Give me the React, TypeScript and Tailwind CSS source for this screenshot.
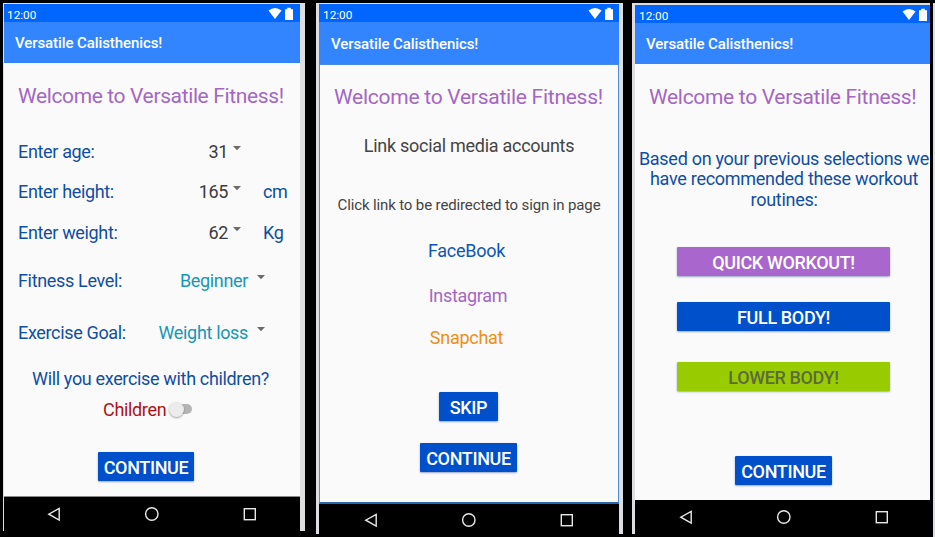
import type { ReactNode } from "react";

function StatusBar({ className }: { className: string }) {
  return (
    <div className={`flex h-[18px] shrink-0 items-start justify-between bg-[#0066ff] text-white ${className}`}>
      <span className="pt-[4px] text-[11.8px] leading-[15px]">12:00</span>
      <svg width="26" height="14" viewBox="0 0 26 14" fill="white" className="mt-[3px]">
        <path d="M0.5 3.6 Q7 -1.6 13.5 3.6 L7 12 Z" />
        <path d="M17 2.2 h2.2 v-1.4 h3.6 v1.4 H25 V13 H17 Z" />
      </svg>
    </div>
  );
}

function AppBar({ className }: { className: string }) {
  return (
    <header className={`flex shrink-0 items-center bg-[#3385ff] pt-[2px] text-[15px] font-medium tracking-[-0.09px] text-white ${className}`}>
      Versatile Calisthenics!
    </header>
  );
}

function NavBar({ className }: { className: string }) {
  return (
    <nav className={`flex shrink-0 items-start bg-black ${className}`}>
      <svg width="212" height="16" viewBox="0 0 212 16" fill="none" stroke="#e8e8e8" strokeWidth="1.4">
        <path d="M12.2 2.4 V14 L1.8 8.2 Z" />
        <circle cx="104.8" cy="8" r="6.2" />
        <rect x="197.3" y="2.7" width="11" height="11" />
      </svg>
    </nav>
  );
}

function Button({ className, children }: { className: string; children: ReactNode }) {
  return (
    <button
      className={`flex h-[29px] shrink-0 items-center justify-center self-start rounded-[1px] pt-px text-[18px] font-medium tracking-[-0.36px] shadow-[0_1px_2px_rgba(0,40,120,0.4)] ${className}`}
    >
      {children}
    </button>
  );
}

function Title({ className }: { className: string }) {
  return <h1 className={`h-6 shrink-0 whitespace-nowrap leading-6 text-[#a566c4] ${className}`}>Welcome to Versatile Fitness!</h1>;
}

function Caret({ className }: { className: string }) {
  return (
    <svg width="8" height="5" viewBox="0 0 8 5" fill="#6b6b6b" className={`shrink-0 ${className}`}>
      <path d="M0 0 H8 L4 4.2 Z" />
    </svg>
  );
}

function Measure({ label, value, unit, className }: { label: string; value: string; unit?: string; className: string }) {
  return (
    <div className={`flex h-6 shrink-0 items-center leading-6 text-[#0f4ea3] ${className}`}>
      <span className="w-[144px]">{label}</span>
      <span className="w-[66px] text-right text-[#3c3c3c]">{value}</span>
      <Caret className="mb-[7px] ml-[5px]" />
      <span className="ml-[22px]">{unit}</span>
    </div>
  );
}

function Choice({ label, value, className }: { label: string; value: string; className: string }) {
  return (
    <div className={`flex h-6 shrink-0 items-center leading-6 text-[#0f4ea3] ${className}`}>
      <span className="w-[115px]">{label}</span>
      <span className="w-[115px] text-right text-[#1797b5]">{value}</span>
      <Caret className="mb-[7px] ml-[9px]" />
    </div>
  );
}

function ProfileScreen() {
  return (
    <section className="flex h-[528px] w-[302px] bg-[#dedede] pl-px pt-px">
      <div className="flex w-[296px] flex-col bg-[#fafafa]">
        <StatusBar className="pl-[3px] pr-[6px]" />
        <AppBar className="h-[41px] pl-[11px]" />
        <main className="flex h-[433px] flex-col pl-[14px] tracking-[-0.34px]">
          <Title className="mt-[21px] text-[21px] tracking-[-0.37px]" />
          <Measure label="Enter age:" value="31" className="mt-[32px]" />
          <Measure label="Enter height:" value="165" unit="cm" className="mt-[16px]" />
          <Measure label="Enter weight:" value="62" unit="Kg" className="mt-[17px]" />
          <Choice label="Fitness Level:" value="Beginner" className="mt-[24px]" />
          <Choice label="Exercise Goal:" value="Weight loss" className="mt-[28px]" />
          <p className="ml-[14px] mt-[22px] h-6 leading-6 text-[#0f4ea3]">Will you exercise with children?</p>
          <label className="ml-[85px] mt-[7px] flex h-6 items-center leading-6 text-[#b01217]">
            Children
            <span className="mb-[2px] ml-[3px] flex h-[10px] w-[23px] items-center rounded-full bg-gradient-to-r from-transparent from-30% to-[#b5b5b5] to-30%">
              <span className="size-[15px] shrink-0 rounded-full bg-[#ececec] shadow-[0_1px_2px_rgba(0,0,0,0.35)]" />
            </span>
          </label>
          <Button className="ml-[80px] mt-[30px] w-[96px] bg-[#0050cc] text-white">CONTINUE</Button>
        </main>
        <NavBar className="h-[35px] border-t border-[#888] pl-[43px] pt-[9px]" />
      </div>
    </section>
  );
}

function SocialScreen() {
  return (
    <section className="flex h-[531px] w-[307px] bg-[#dedee2] pl-[3px] pt-px">
      <div className="flex w-[300px] flex-col bg-[#fafafa]">
        <StatusBar className="pl-[4px] pr-[5px]" />
        <AppBar className="h-[42px] pl-[12px]" />
        <main className="flex h-[440px] flex-col items-center border border-b-2 border-[#4a8fd0] border-b-[#2468ad] text-center tracking-[-0.28px]">
          <Title className="mr-px mt-[20px] text-[21px] tracking-[-0.26px]" />
          <h2 className="mt-[25px] h-6 leading-6 text-[#444]">Link social media accounts</h2>
          <p className="mt-[35px] h-6 whitespace-nowrap text-[15px] leading-6 tracking-[-0.13px] text-[#444]">Click link to be redirected to sign in page</p>
          <a className="mr-[5px] mt-[22px] h-6 leading-6 text-[#0f55b5]">FaceBook</a>
          <a className="mr-[2px] mt-[21px] h-6 leading-6 text-[#a566c4]">Instagram</a>
          <a className="mr-[5px] mt-[18px] h-6 leading-6 text-[#ee8f16]">Snapchat</a>
          <Button className="ml-[119px] mt-[42px] w-[59px] bg-[#0050cc] text-white">SKIP</Button>
          <Button className="ml-[100px] mt-[22px] w-[97px] bg-[#0050cc] text-white">CONTINUE</Button>
        </main>
        <NavBar className="h-[30px] pl-[45px] pt-[8px]" />
      </div>
    </section>
  );
}

function RoutineScreen() {
  return (
    <section className="flex h-[531px] w-[298px] bg-[#dedee2] pl-[3px] pt-[2px]">
      <div className="flex w-[295px] flex-col bg-[#fafafa]">
        <StatusBar className="pl-[4px] pr-[2px]" />
        <AppBar className="h-[41px] pl-[11px]" />
        <main className="flex h-[436px] flex-col">
          <Title className="ml-[14px] mt-[21px] text-[21px] tracking-[-0.31px]" />
          <p className="mt-[40px] h-[62px] w-[298px] whitespace-nowrap text-center leading-[20.4px] tracking-[-0.28px] text-[#0f4ea3]">
            Based on your previous selections we
            <br />
            have recommended these workout
            <br />
            routines:
          </p>
          <Button className="ml-[42px] mt-[36px] w-[213px] bg-[#a966cc] text-white">QUICK WORKOUT!</Button>
          <Button className="ml-[42px] mt-[26px] w-[213px] bg-[#0050cc] text-white">FULL BODY!</Button>
          <Button className="ml-[42px] mt-[31px] w-[213px] bg-[#99cc00] text-[#5c6b3c]">LOWER BODY!</Button>
          <Button className="ml-[100px] mt-[65px] w-[97px] bg-[#0050cc] text-white">CONTINUE</Button>
        </main>
        <NavBar className="h-[34px] pl-[44px] pt-[9px]" />
      </div>
    </section>
  );
}

export default function App() {
  return (
    <div className="flex h-[537px] w-[935px] items-start overflow-hidden bg-black pl-[3px] pt-[3px] font-[Roboto,sans-serif] text-[18px]">
      <ProfileScreen />
      <div className="w-[11px] shrink-0" />
      <SocialScreen />
      <div className="w-[9px] shrink-0" />
      <RoutineScreen />
      <div className="ml-[3px] h-[534px] w-[2px] shrink-0 bg-[#dedee2]" />
    </div>
  );
}
